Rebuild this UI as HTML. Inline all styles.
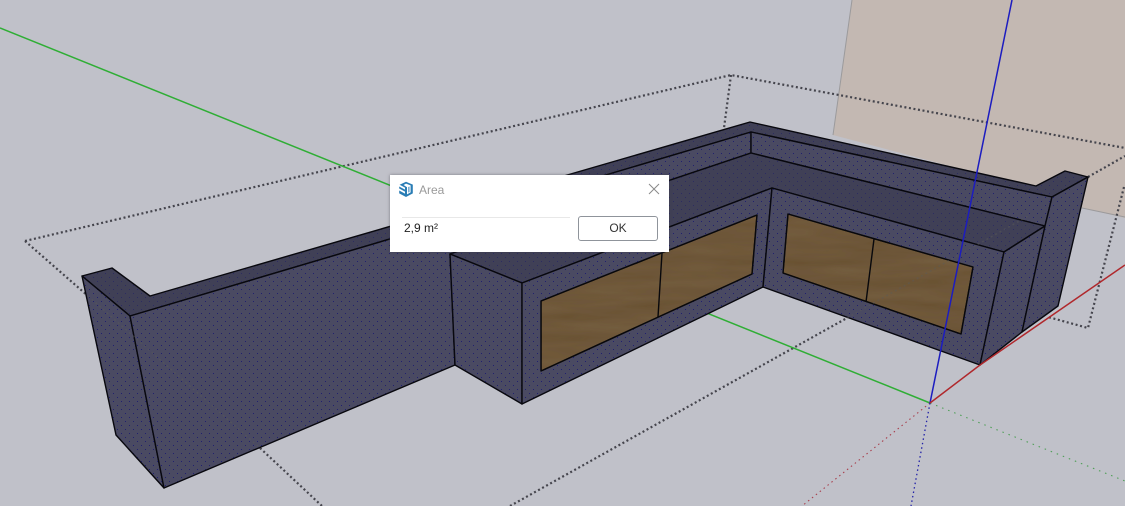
<!DOCTYPE html>
<html><head><meta charset="utf-8"><style>
html,body{margin:0;padding:0;width:1125px;height:506px;overflow:hidden;background:#c0c1c9}
svg{position:absolute;left:0;top:0}
#dlg{position:absolute;left:390px;top:175px;width:279px;height:77px;background:#fff;box-shadow:0 0 3px rgba(60,60,70,.55);font-family:"Liberation Sans",sans-serif}
#title{position:absolute;left:29px;top:8px;font-size:12px;line-height:14px;color:#9a9a9a}
#sep{position:absolute;left:12px;top:42px;width:168px;height:1px;background:#e8e8e8}
#val{position:absolute;left:14px;top:46px;font-size:12px;line-height:14px;color:#222}
#ok{position:absolute;left:188px;top:41px;width:78px;height:23px;border:1px solid #8f949b;border-radius:3px;background:#fff;font-size:12px;line-height:23px;text-align:center;color:#333}
</style></head><body>
<svg width="1125" height="506" viewBox="0 0 1125 506">
<defs>
<pattern id="d1" width="8" height="8" patternUnits="userSpaceOnUse">
<rect width="8" height="8" fill="#4a4a62"/>
<rect x="1" y="1" width="1" height="1" fill="#20206e"/><rect x="5" y="5" width="1" height="1" fill="#20206e"/>
</pattern>
<pattern id="d2" width="8" height="8" patternUnits="userSpaceOnUse">
<rect width="8" height="8" fill="#404056"/>
<rect x="1" y="1" width="1" height="1" fill="#2c2c60"/><rect x="5" y="5" width="1" height="1" fill="#2c2c60"/>
</pattern>
<filter id="wood" x="0" y="0" width="100%" height="100%">
<feTurbulence type="fractalNoise" baseFrequency="0.012 0.09" numOctaves="3" seed="4"/>
<feColorMatrix values="0 0 0 0 0.27  0 0 0 0 0.19  0 0 0 0 0.1  0.32 0 0 0 -0.05"/>
<feComposite in2="SourceGraphic" operator="in"/>
<feMerge><feMergeNode in="SourceGraphic"/><feMergeNode/></feMerge>
</filter>
</defs>

<polygon points="852,0 1125,0 1125,218 1082,208 1040,190 833,135" fill="#c3b8b2"/>
<path d="M852,0L833,135M1082,208L1125,217" stroke="#9b9a9c" stroke-width="1" fill="none"/>

<g fill="none" stroke="#45454d" stroke-width="2.2" stroke-dasharray="2 2.6">
<path d="M25,241L731,75L1125,148"/>
<path d="M731,75L724,128"/>
<path d="M25,241L88,296"/>
<path d="M260,448L322,506"/>
<path d="M510,506L847,318"/>
<path d="M1088,177L1125,156"/>
<path d="M1124,187L1088,328L1048,317"/>
</g>

<path d="M0,28L930,403" stroke="#2fae35" stroke-width="1.5" fill="none"/>
<path d="M930,403L1125,481" stroke="#4f9f57" stroke-width="1.1" stroke-dasharray="1.5 5" fill="none"/>
<path d="M930,403L802,506" stroke="#a8404e" stroke-width="1.1" stroke-dasharray="1.5 3.5" fill="none"/>
<path d="M930,403L911,506" stroke="#2222a8" stroke-width="1.3" stroke-dasharray="1.5 3" fill="none"/>

<!-- model faces -->
<g stroke="#08080e" stroke-width="1.4" stroke-linejoin="round">
<polygon points="82,276 112,268 150,296 750,122 1036,186 1065,171 1088,177 1052,197 751,132 130,316" fill="url(#d2)"/>
<polygon points="82,276 130,316 164,488 116,435" fill="url(#d1)"/>
<polygon points="130,316 751,132 751,153 450,254 455,365 164,488" fill="url(#d1)"/>
<polygon points="751,132 1052,197 1045,226 751,153" fill="url(#d1)"/>
<polygon points="450,254 751,153 1045,226 1004,252 772,188 522,283" fill="url(#d2)"/>
<polygon points="450,254 522,283 522,404 455,365" fill="url(#d1)"/>
<polygon points="522,283 772,188 763,287 522,404" fill="url(#d1)"/>
<polygon points="772,188 1004,252 980,365 763,287" fill="url(#d1)"/>
<polygon points="1004,252 1045,226 1022,332 980,365" fill="url(#d1)"/>
<polygon points="1052,197 1088,177 1058,306 1022,332 1045,226" fill="url(#d1)"/>
</g>

<!-- wood -->
<g stroke="#08080c" stroke-width="1.4" stroke-linejoin="round">
<polygon points="541,301 757,215 752,274 541,371" fill="#6a5334" filter="url(#wood)"/>
<polygon points="788,214 973,267 961,334 783,273" fill="#6a5334" filter="url(#wood)"/>
<polygon points="541,301 757,215 752,274 541,371" fill="none"/>
<polygon points="788,214 973,267 961,334 783,273" fill="none"/>
<path d="M662,253L658,317M874,239L866,302" fill="none"/>
</g>

<!-- hidden dotted ghost -->
<g fill="none" stroke="#5a5a58" stroke-width="1.6" stroke-dasharray="2 3" opacity=".45">
<path d="M88,296L260,448"/>
<path d="M847,318L1030,215"/>
</g>

<path d="M930,403L1012,0" stroke="#1c1cc0" stroke-width="1.5" fill="none"/>
<path d="M930,403L980,365" stroke="#b0282c" stroke-width="1.5" fill="none"/>
<path d="M980,365L1125,265" stroke="#b0282c" stroke-width="1.5" fill="none"/>
</svg>

<div id="dlg">
<svg width="16" height="17" viewBox="0 0 16 17" style="left:8px;top:6px">
<path d="M8,0.8L14.8,3.6V12.4L8,16L1.2,12.4V9.5L7,12.6V10.6L1.2,7.5V5.5L7,8.6V6.6L1.6,3.8Z" fill="#2a7db5"/>
<path d="M8,2.6L12.6,4.4V11.4L9,13.4V6.2L5.6,4Z" fill="#fff"/>
<path d="M10.4,6L11.4,5.5V11L10.4,11.6Z" fill="#2a7db5"/>
</svg>
<div id="title">Area</div>
<svg width="12" height="12" viewBox="0 0 12 12" style="left:258px;top:8px"><path d="M1,1L11,11M11,1L1,11" stroke="#8a8a8a" stroke-width="1" fill="none"/></svg>
<div id="sep"></div>
<div id="val">2,9 m²</div>
<div id="ok">OK</div>
</div>
</body></html>
